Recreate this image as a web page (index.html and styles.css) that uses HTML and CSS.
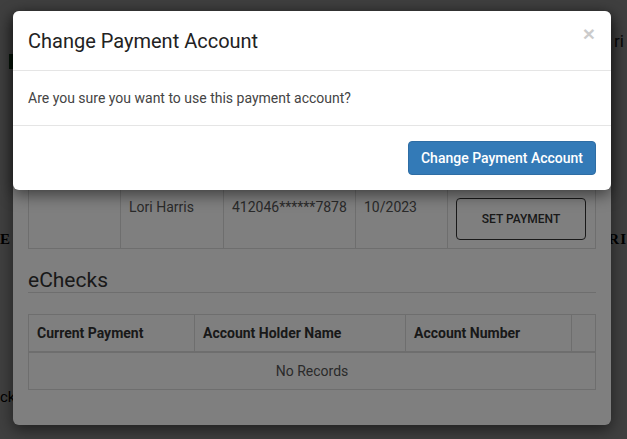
FILE: index.html
```html
<!DOCTYPE html>
<html>
<head>
<meta charset="utf-8">
<link rel="stylesheet" href="styles.css">
</head>
<body>
<div class="page">
  <div class="page-row row-top">
    <span class="green-bar"></span>
    <span class="page-name">ri</span>
  </div>
  <div class="page-row row-mid">
    <span class="serif-left">E</span>
    <span class="serif-right">RI</span>
  </div>
  <div class="page-row row-bot">
    <span class="back-link">ck</span>
  </div>
</div>

<div class="backdrop"></div>

<div class="modal modal-lower">
  <div class="lower-body">
    <table class="grid cards">
      <tr>
        <td class="c1"></td>
        <td class="c2">Lori Harris</td>
        <td class="c3">412046******7878</td>
        <td class="c4">10/2023</td>
        <td class="c5"><button class="set-btn">SET PAYMENT</button></td>
      </tr>
    </table>
    <h2 class="section-title">eChecks</h2>
    <table class="grid checks">
      <tr class="head">
        <th class="h1">Current Payment</th>
        <th class="h2">Account Holder Name</th>
        <th class="h3">Account Number</th>
        <th class="h4"></th>
      </tr>
      <tr>
        <td colspan="4" class="empty">No Records</td>
      </tr>
    </table>
  </div>
</div>

<div class="backdrop"></div>

<div class="modal modal-top">
  <div class="m-header">
    <h4 class="m-title">Change Payment Account</h4>
    <button class="close">&times;</button>
  </div>
  <div class="m-body">Are you sure you want to use this payment account?</div>
  <div class="m-footer">
    <button class="primary">Change Payment Account</button>
  </div>
</div>
</body>
</html>
```

FILE: styles.css
```css
* { box-sizing: border-box; }
html, body {
  margin: 0;
  padding: 0;
  width: 627px;
  height: 439px;
  overflow: hidden;
}
body {
  font-family: Roboto, "Liberation Sans", sans-serif;
  font-size: 14px;
  color: #333;
  background: #fff;
  position: relative;
}

.page {
  display: flex;
  flex-direction: column;
  height: 439px;
}
.page-row {
  display: flex;
  justify-content: space-between;
  align-items: center;
}
.row-top { margin-top: 30px; height: 22px; }
.green-bar {
  display: block;
  width: 6px;
  height: 15px;
  margin-left: 9px;
  margin-top: 40px;
  background: #1a5a28;
}
.page-name {
  font-size: 17px;
  margin-right: 3px;
  color: #222;
}
.row-mid {
  margin-top: 179px;
  font-family: "Liberation Serif", serif;
  font-weight: bold;
  font-size: 15px;
  color: #000;
}
.serif-left { margin-left: 0; }
.serif-right { margin-right: 0; letter-spacing: 1px; }
.row-bot { margin-top: 140px; font-size: 15px; color: #000; }
.back-link { margin-left: 0; }

.backdrop {
  position: absolute;
  inset: 0;
  background: rgba(0, 0, 0, 0.5);
}

.modal {
  position: absolute;
  left: 13px;
  width: 598px;
  background: #fff;
  border-radius: 6px;
  box-shadow: 0 5px 15px rgba(0, 0, 0, 0.5);
}
.modal-lower {
  top: 11px;
  height: 414px;
  overflow: hidden;
}
.lower-body {
  padding: 136px 15px 0;
  display: flex;
  flex-direction: column;
}
.grid {
  border-collapse: collapse;
  width: 568px;
  color: #555;
}
.grid td, .grid th {
  border: 1px solid #ddd;
  text-align: left;
  vertical-align: top;
}
.cards td {
  height: 100px;
  padding: 8px 8px;
  font-size: 14px;
}
.cards td.c1 { width: 92px; }
.cards td.c2 { width: 103px; }
.cards td.c3 { width: 132px; }
.cards td.c4 { width: 92px; }
.cards td.c5 { padding-top: 50px; }
.cards td.c2, .cards td.c3, .cards td.c4 { padding-top: 51px; }
.set-btn {
  display: block;
  width: 130px;
  height: 42px;
  background: #fff;
  border: 1px solid #333;
  border-radius: 4px;
  font-family: Roboto, "Liberation Sans", sans-serif;
  font-size: 12px;
  font-weight: 500;
  color: #333;
}
.section-title {
  margin: 19px 0 21px;
  padding-bottom: 0;
  border-bottom: 1px solid #ddd;
  font-weight: 400;
  font-size: 21px;
  line-height: 24px;
  color: #333;
}
.checks th {
  height: 37px;
  padding: 0 8px;
  vertical-align: middle;
  font-weight: 700;
  font-size: 14px;
  color: #333;
  border-bottom-width: 2px;
}
.checks th.h1 { width: 166px; }
.checks th.h2 { width: 211px; }
.checks th.h3 { width: 166px; }
.checks td.empty {
  height: 38px;
  text-align: center;
  vertical-align: middle;
  color: #555;
}

.modal-top {
  top: 11px;
  height: 179px;
  display: flex;
  flex-direction: column;
}
.m-header {
  height: 60px;
  padding: 0 15px;
  display: flex;
  align-items: center;
  justify-content: space-between;
  border-bottom: 1px solid #e5e5e5;
}
.m-title {
  margin: 0;
  font-size: 20px;
  font-weight: 400;
  color: #222;
}
.close {
  border: 0;
  background: none;
  padding: 0;
  margin-top: -14px;
  margin-right: 1px;
  font-family: "Liberation Sans", sans-serif;
  font-size: 21px;
  font-weight: 700;
  color: #000;
  opacity: 0.2;
  line-height: 1;
}
.m-body {
  height: 55px;
  padding: 0 15px;
  display: flex;
  align-items: center;
  border-bottom: 1px solid #e5e5e5;
  color: #444;
  font-size: 14px;
}
.m-footer {
  flex: 1;
  display: flex;
  justify-content: flex-end;
  align-items: flex-start;
  padding: 15px 15px 0;
}
.primary {
  width: 188px;
  height: 34px;
  background: #337ab7;
  color: #fff;
  border: 1px solid #2e6da4;
  border-radius: 4px;
  font-family: Roboto, "Liberation Sans", sans-serif;
  font-size: 14px;
  font-weight: 500;
}
```
